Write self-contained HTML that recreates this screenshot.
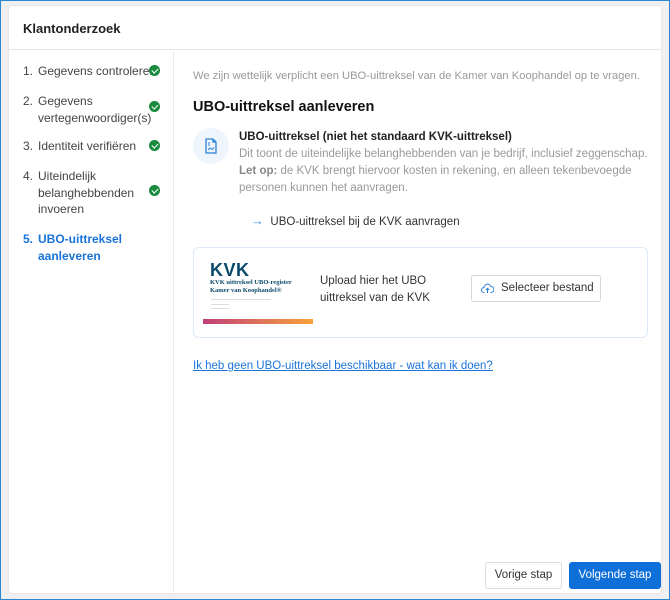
<!DOCTYPE html>
<html><head><meta charset="utf-8"><style>
*{box-sizing:border-box;margin:0;padding:0}
body{width:670px;height:600px;overflow:hidden;background:#f0f0f0;font-family:"Liberation Sans",sans-serif;color:#333;border:1px solid #2b87d1;position:relative}
.card{position:absolute;left:8px;top:5px;width:652px;height:587px;background:#fff;border-radius:3px;box-shadow:0 0 2px rgba(0,0,0,.1)}
.hdr{height:44px;border-bottom:1px solid #e6e6e6;padding:15px 14px;font-weight:bold;font-size:13px;color:#222}
.side{position:absolute;left:0;top:45px;width:165px;bottom:0;border-right:1px solid #ececec}
.step{position:absolute;left:14px;font-size:12px;line-height:16.5px;color:#444}
.step .n{position:absolute;left:0;width:14px}
.step .t{margin-left:15px;display:block}
.chk{position:absolute;left:140px;width:11px;height:11px;border-radius:50%;background:#1a8a3e}
.chk:after{content:"";position:absolute;left:3.5px;top:2px;width:2.5px;height:5px;border:solid #fff;border-width:0 1.6px 1.6px 0;transform:rotate(45deg)}
.main{position:absolute;left:184px;top:40px;right:0}
.blue{color:#1a73d9;font-weight:bold}
</style></head><body>
<div class="card">
<div class="hdr">Klantonderzoek</div>
<div class="side">
<div class="step" style="top:12px"><span class="n">1.</span><span class="t">Gegevens controleren</span></div><div class="chk" style="top:14px"></div>
<div class="step" style="top:42px"><span class="n">2.</span><span class="t">Gegevens<br>vertegenwoordiger(s)</span></div><div class="chk" style="top:50px"></div>
<div class="step" style="top:87px"><span class="n">3.</span><span class="t">Identiteit verifiëren</span></div><div class="chk" style="top:89px"></div>
<div class="step" style="top:117px"><span class="n">4.</span><span class="t">Uiteindelijk<br>belanghebbenden<br>invoeren</span></div><div class="chk" style="top:134px"></div>
<div class="step blue" style="top:180px;color:#1a73d9"><span class="n">5.</span><span class="t">UBO-uittreksel<br>aanleveren</span></div>
</div>
<div class="main">
<div style="position:absolute;top:24px;font-size:11.2px;color:#999">We zijn wettelijk verplicht een UBO-uittreksel van de Kamer van Koophandel op te vragen.</div>
<div style="position:absolute;top:53px;font-size:14.5px;font-weight:bold;color:#111">UBO-uittreksel aanleveren</div>
<div style="position:absolute;top:82px;left:0;width:36px;height:36px;border-radius:50%;background:#eef5fd"></div>
<svg style="position:absolute;left:11px;top:92px" width="14" height="16" viewBox="0 0 14 16"><path d="M2 1h7l3 3v11H2z M9 1v3h3" fill="none" stroke="#2b7fd6" stroke-width="1.3"/><path d="M4 12l2-2 2 1.5 2-2" fill="none" stroke="#2b7fd6" stroke-width="1"/><path d="M4 5h2M4 7h2" stroke="#2b7fd6"/></svg>
<div style="position:absolute;top:83px;left:46px;font-size:11.5px;line-height:17px;color:#999;width:420px">
<b style="color:#222">UBO-uittreksel (niet het standaard KVK-uittreksel)</b><br>Dit toont de uiteindelijke belanghebbenden van je bedrijf, inclusief zeggenschap.<br><b style="color:#888">Let op:</b> de KVK brengt hiervoor kosten in rekening, en alleen tekenbevoegde personen kunnen het aanvragen.</div>
<div style="position:absolute;top:167px;left:58px;font-size:11.5px;color:#333"><span style="color:#4a90e2;font-size:13px">→</span>&nbsp; UBO-uittreksel bij de KVK aanvragen</div>
<div style="position:absolute;top:201px;left:0;width:455px;height:91px;border:1px solid #dde9f7;border-radius:6px">
<div style="position:absolute;left:16px;top:12px;font-weight:900;font-size:18px;color:#0b4a6b;letter-spacing:.5px">KVK</div>
<div style="position:absolute;left:16px;top:31px;font-family:'Liberation Serif',serif;font-size:6.5px;font-weight:bold;color:#0b4a6b;line-height:8px">KVK uittreksel UBO-register<br>Kamer van Koophandel®</div>
<div style="position:absolute;left:17px;top:51px;width:60px;height:1px;background:#ddd"></div>
<div style="position:absolute;left:17px;top:56px;width:18px;height:1px;background:#ddd"></div>
<div style="position:absolute;left:17px;top:60px;width:18px;height:1px;background:#ddd"></div>
<div style="position:absolute;left:9px;top:71px;width:110px;height:5px;background:linear-gradient(90deg,#c0407a,#f7a23a)"></div>
<div style="position:absolute;left:126px;top:25px;font-size:11.5px;line-height:17px;color:#333">Upload hier het UBO<br>uittreksel van de KVK</div>
<div style="position:absolute;left:277px;top:27px;width:130px;height:27px;border:1px solid #d6d6d6;border-radius:3px;font-size:11.5px;line-height:25px;padding-left:29px;color:#333">Selecteer bestand</div>
<svg style="position:absolute;left:287px;top:35px" width="13" height="11" viewBox="0 0 13 11"><path d="M3.5 9.5H3a2.5 2.5 0 0 1 0-5 3.5 3.5 0 0 1 6.8-1A2.5 2.5 0 0 1 10 9.5h-.5M6.5 10V5.5M4.8 7l1.7-1.7L8.2 7" fill="none" stroke="#2b7fd6" stroke-width="1"/></svg>
</div>
<div style="position:absolute;top:314px;left:0;font-size:11.5px;color:#1a73d9;text-decoration:underline">Ik heb geen UBO-uittreksel beschikbaar - wat kan ik doen?</div>
</div>
<div style="position:absolute;left:476px;top:556px;width:77px;height:27px;border:1px solid #ddd;border-radius:3px;font-size:11.5px;line-height:25px;text-align:center;color:#333">Vorige stap</div>
<div style="position:absolute;left:560px;top:556px;width:92px;height:27px;background:#0f6fd8;border-radius:3px;font-size:11.5px;line-height:27px;text-align:center;color:#fff">Volgende stap</div>
</div>
</body></html>
